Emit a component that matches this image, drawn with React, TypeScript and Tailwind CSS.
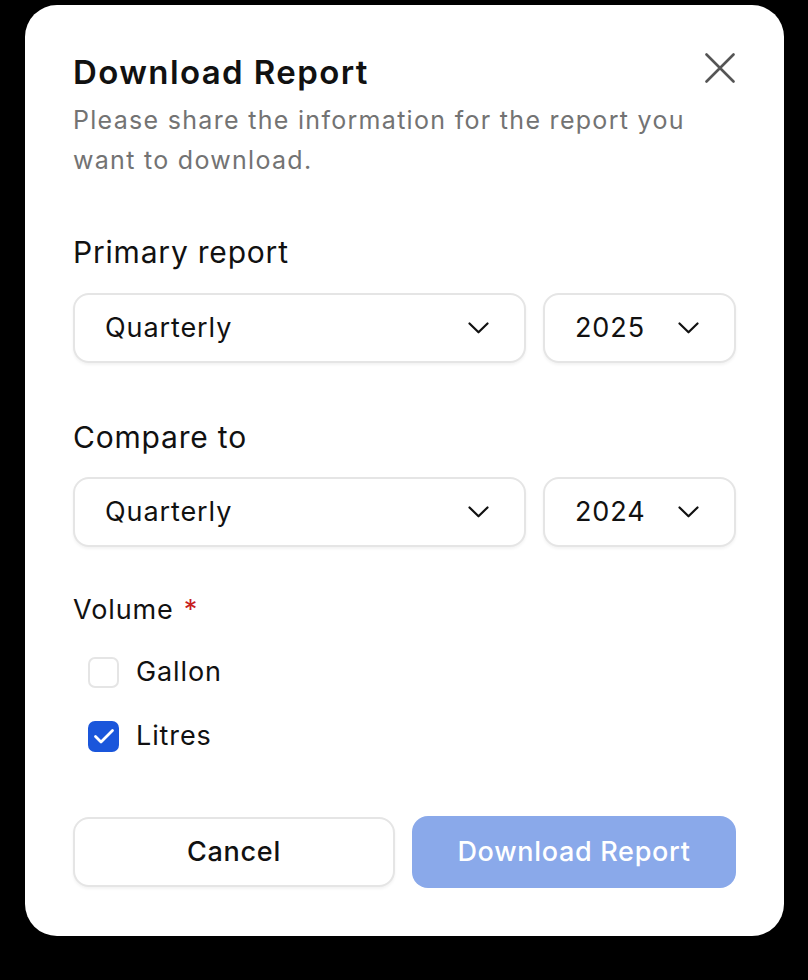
import React from "react";

function Chevron() {
  return (
    <svg width="21" height="12" viewBox="0 0 21 12" fill="none" stroke="#111" strokeWidth="2.2" strokeLinecap="round" strokeLinejoin="round">
      <path d="M1.5 1.5L10.5 10.3L19.5 1.5" />
    </svg>
  );
}

function Select({ value, wide }: { value: string; wide?: boolean }) {
  return (
    <div
      className={
        "h-[70px] rounded-[16px] border-2 border-[#e5e5e5] bg-white flex items-center justify-between shadow-[0_2px_3px_rgba(0,0,0,0.05)] pl-[30px] pr-[35px] " +
        (wide ? "flex-1" : "w-[193px]")
      }
    >
      <span className="text-[27px] tracking-[0.9px] text-[#111]">{value}</span>
      <Chevron />
    </div>
  );
}

export default function App() {
  return (
    <div className="w-[808px] h-[980px] bg-black pt-[5px] pl-[25px]" style={{ fontFamily: "Inter, 'Noto Sans', sans-serif" }}>
      <div className="w-[759px] h-[931px] bg-white rounded-[32px] pl-[48px] pr-[48px] pt-[47px] flex flex-col">
        <div className="flex justify-between items-start">
          <h1 className="text-[33px] leading-[40px] font-semibold text-[#111] tracking-[1.4px]">Download Report</h1>
          <svg className="mt-[1px] mr-[1px]" width="30" height="30" viewBox="0 0 30 30" fill="none" stroke="#555" strokeWidth="2.6" strokeLinecap="round">
            <path d="M1.5 1.5L28.5 28.5M28.5 1.5L1.5 28.5" />
          </svg>
        </div>
        <p className="mt-[8px] text-[25px] leading-[40px] text-[#737373] tracking-[1.3px] pr-[20px]">
          Please share the information for the report you want to download.
        </p>

        <div className="mt-[54px] text-[30px] leading-[36px] tracking-[0.8px] text-[#111]">Primary report</div>
        <div className="mt-[23px] flex gap-[17px]">
          <Select value="Quarterly" wide />
          <Select value="2025" />
        </div>

        <div className="mt-[56px] text-[30px] leading-[36px] tracking-[0.8px] text-[#111]">Compare to</div>
        <div className="mt-[22px] flex gap-[17px]">
          <Select value="Quarterly" wide />
          <Select value="2024" />
        </div>

        <div className="mt-[46px] text-[27px] leading-[34px] tracking-[0.9px] text-[#111] flex items-center">
          Volume <span className="ml-[10px] text-[#c81e1e]">*</span>
        </div>
        <div className="mt-[28px] pl-[15px] flex flex-col gap-[30px]">
          <label className="flex items-center gap-[17px]">
            <span className="w-[31px] h-[31px] rounded-[7px] border-2 border-[#e5e5e5] bg-white" />
            <span className="text-[27px] leading-[34px] tracking-[0.9px] text-[#111]">Gallon</span>
          </label>
          <label className="flex items-center gap-[17px]">
            <span className="w-[31px] h-[31px] rounded-[7px] bg-[#1a56db] flex items-center justify-center">
              <svg width="24" height="24" viewBox="0 0 24 24" fill="none" stroke="#fff" strokeWidth="2.8" strokeLinecap="round" strokeLinejoin="round">
                <path d="M3.5 12.5l5.5 5.5L20.5 6.5" />
              </svg>
            </span>
            <span className="text-[27px] leading-[34px] tracking-[0.9px] text-[#111]">Litres</span>
          </label>
        </div>

        <div className="mt-[63px] flex gap-[17px] items-center">
          <button className="w-[322px] h-[70px] rounded-[16px] border-2 border-[#e5e5e5] bg-white text-[27px] tracking-[0.7px] font-medium text-[#111] shadow-[0_2px_3px_rgba(0,0,0,0.05)]">
            Cancel
          </button>
          <button className="flex-1 h-[72px] rounded-[16px] bg-[#8aa9ea] text-[27px] tracking-[0.7px] font-medium text-white">
            Download Report
          </button>
        </div>
      </div>
    </div>
  );
}
